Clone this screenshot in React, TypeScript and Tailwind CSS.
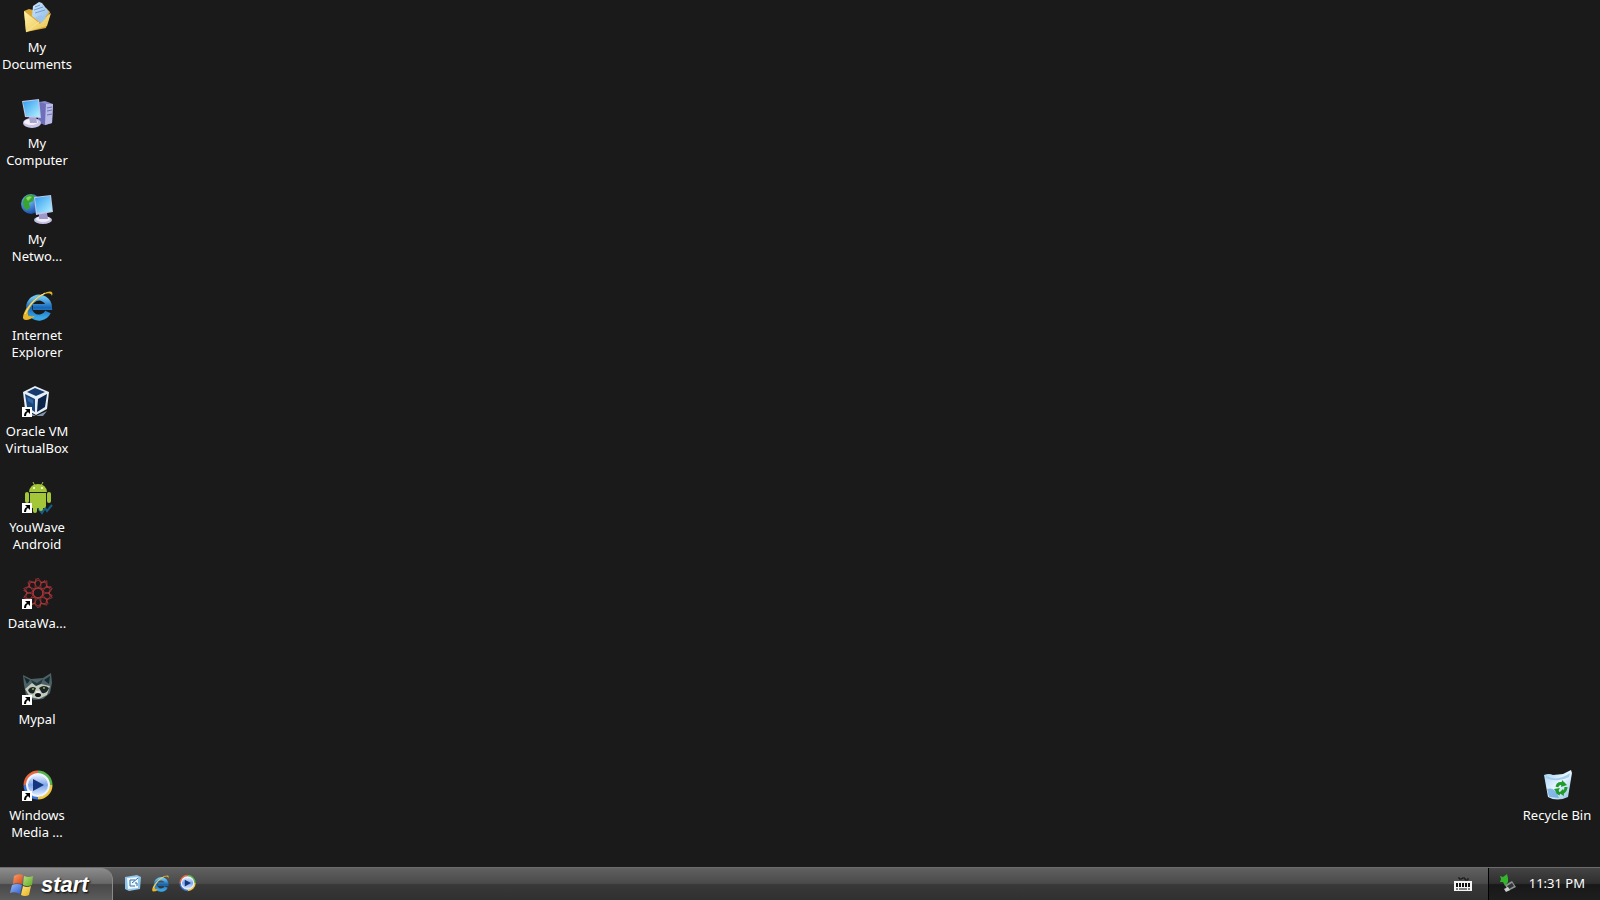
import React from 'react'

type Shortcut = {
    label: string
    Icon: () => React.ReactElement
    linked?: boolean
}

const DocumentsIcon = () => (
    <>
        <defs>
            <linearGradient id="folder" x1="0" y1="0" x2="1" y2="1">
                <stop offset="0" stopColor="#fff3a8" />
                <stop offset="1" stopColor="#e9bf4c" />
            </linearGradient>
            <linearGradient id="paper" x1="0" y1="0" x2="1" y2="1">
                <stop offset="0" stopColor="#cfe8fb" />
                <stop offset="1" stopColor="#8db8e6" />
            </linearGradient>
        </defs>
        <path d="M3 10 L8 8 L12 9 L25 7 L29 11 L25 27 L5 31 Z" fill="#d9a93a" />
        <path d="M18 1 L21 2 L28 11 L20 22 L11 15 L12 5 Z" fill="url(#paper)" />
        <path d="M14 6 L19 4 M13 9 L22 6 M14 12 L24 9" stroke="#6c9bd6" />
        <path d="M3 10 L13 18 L19 23 L24 17 L30 12 L26 25 L5 31 Z" fill="url(#folder)" />
        <path d="M14 17 L20 14 L25 17 L20 22 Z" fill="#9cc4ec" />
        <path d="M5 31 L18 21" stroke="#f8e490" />
    </>
)

const ComputerIcon = () => (
    <>
        <defs>
            <linearGradient id="screen" x1="0" y1="0" x2="1" y2="1">
                <stop offset="0" stopColor="#2f9cf0" />
                <stop offset="1" stopColor="#b5f2ff" />
            </linearGradient>
        </defs>
        <path d="M18 5 L24 4 L32 7 L31 26 L24 28 L17 25 Z" fill="#8a8ccb" />
        <path d="M18 5 L25 7 L24 28 L17 25 Z" fill="#6d6fb8" />
        <path d="M25 7 L32 7 L31 26 L24 28 Z" fill="#b9bae6" />
        <path d="M26 11 L31 10 M26 14 L31 13 M26 18 L31 17" stroke="#6f71b9" />
        <ellipse cx="11" cy="26" rx="9" ry="5" fill="#c9c5e6" />
        <ellipse cx="10" cy="25" rx="7" ry="3" fill="#f3f1fb" />
        <path d="M8 20 L15 20 L16 26 L9 26 Z" fill="#a6a3cf" />
        <path d="M1 4 L18 2 L20 21 L4 20 Z" fill="#c3c6ea" />
        <path d="M2 5 L17 3 L19 20 L5 19 Z" fill="url(#screen)" />
    </>
)

const NetworkIcon = () => (
    <>
        <defs>
            <radialGradient id="globe" cx="0.35" cy="0.3" r="0.8">
                <stop offset="0" stopColor="#7cc8ff" />
                <stop offset="1" stopColor="#0d3f9e" />
            </radialGradient>
        </defs>
        <circle cx="10" cy="11" r="10" fill="url(#globe)" />
        <path d="M4 4 Q9 0 14 3 L12 8 L8 10 L9 15 L5 17 Q1 12 2 8 Z" fill="#3aa52e" />
        <path d="M5 5 Q8 2 11 4 L7 8 Z" fill="#86da5e" />
        <ellipse cx="22" cy="27" rx="9" ry="4" fill="#c5c1e2" />
        <ellipse cx="22" cy="26" rx="7" ry="3" fill="#eeecf8" />
        <path d="M18 20 L26 20 L27 26 L18 26 Z" fill="#9c98c8" />
        <path d="M13 4 L30 2 L32 19 L15 22 Z" fill="#c3c6ea" />
        <path d="M14 5 L29 3 L31 18 L16 20 Z" fill="url(#screen)" />
    </>
)

const ExplorerIcon = () => (
    <>
        <defs>
            <linearGradient id="letter" x1="0" y1="0" x2="0" y2="1">
                <stop offset="0" stopColor="#6cc3f2" />
                <stop offset="0.5" stopColor="#1666b8" />
                <stop offset="1" stopColor="#3aa6e6" />
            </linearGradient>
        </defs>
        <path
            d="M27 23 A10 10 0 1 1 28 18 L12 18"
            fill="none"
            stroke="url(#letter)"
            strokeWidth="6"
        />
        <path
            d="M31 7 Q33 1 26 3 Q14 7 5 20 Q-1 31 5 31 Q9 31 14 27 Q5 29 7 22 Q13 10 24 5 Q30 3 31 7 Z"
            fill="#e5b52c"
        />
        <path d="M4 25 Q10 11 24 4" fill="none" stroke="#fbe68a" />
    </>
)

const VirtualBoxIcon = () => (
    <>
        <path d="M6 26 L15 31 L26 26 L22 31 L10 31 Z" fill="#7d93ad" />
        <path d="M14 1 L28 7 L26 24 L15 30 L4 24 L2 7 Z" fill="#e6eef7" />
        <path d="M14 3 L24 7 L15 11 L6 7 Z" fill="#163a6b" />
        <path d="M4 9 L14 14 L14 27 L6 22 Z" fill="#1b477f" />
        <path d="M26 9 L17 14 L16 27 L24 22 Z" fill="#0c2448" />
        <path d="M6 12 L12 15 L12 19 L7 16 Z" fill="#3568a4" />
    </>
)

const AndroidIcon = () => (
    <>
        <path d="M12 1 L14 5 M22 1 L20 5" stroke="#9fc33b" />
        <path d="M8 11 Q9 3 17 3 Q25 3 26 11 Z" fill="#a4c639" />
        <circle cx="13" cy="7" r="1" fill="#fff" />
        <circle cx="21" cy="7" r="1" fill="#fff" />
        <path d="M16 26 L21 32 L24 27 L26 30 L31 24" fill="none" stroke="#155f86" strokeWidth="2" />
        <rect x="4" y="11" width="4" height="11" rx="2" fill="#a4c639" />
        <rect x="26" y="11" width="4" height="11" rx="2" fill="#a4c639" />
        <path d="M9 12 H25 V25 Q25 27 23 27 H11 Q9 27 9 25 Z" fill="#a4c639" />
        <rect x="12" y="25" width="4" height="7" rx="2" fill="#a4c639" />
        <rect x="18" y="25" width="4" height="5" rx="2" fill="#a4c639" />
    </>
)

const DataWaveIcon = () => (
    <g fill="none" stroke="#b5363b" strokeWidth="0.7">
        {[0, 36, 72, 108, 144, 180, 216, 252, 288, 324].map((angle) => (
            <g key={angle} transform={`rotate(${angle} 17 16)`}>
                <path d="M17 1 L21 6 L17 11 L13 6 Z" />
                <path d="M13 6 L17 3 L21 6 L24 3" />
                <path d="M17 11 L22 13" />
            </g>
        ))}
        <circle cx="17" cy="16" r="5" />
    </g>
)

const RaccoonIcon = () => (
    <>
        <path d="M2 2 L10 6 L22 5 L30 0 L31 10 L29 20 L22 26 L13 27 L5 22 L3 12 Z" fill="#4c6266" />
        <path d="M3 4 L9 7 L6 11 Z" fill="#15292f" />
        <path d="M29 3 L23 7 L28 11 Z" fill="#15292f" />
        <path d="M10 7 L16 10 L22 6 L18 15 L14 15 Z" fill="#23363b" />
        <path d="M4 16 L11 10 L15 13 L20 11 L29 13 L26 22 L18 26 L9 24 Z" fill="#c3c9bd" />
        <path d="M7 17 Q10 12 15 15 L13 20 Q9 22 7 17 Z" fill="#1b2724" />
        <path d="M28 15 Q23 11 18 15 L21 20 Q26 21 28 15 Z" fill="#1b2724" />
        <circle cx="12" cy="16" r="1" fill="#98a85e" />
        <circle cx="23" cy="15" r="1" fill="#98a85e" />
        <path d="M15 18 L19 18 L20 23 L14 24 Z" fill="#e9ebe2" />
        <ellipse cx="17" cy="22" rx="3" ry="2" fill="#0d1212" />
    </>
)

const MediaPlayerIcon = () => (
    <>
        <defs>
            <linearGradient id="disc" x1="0" y1="0" x2="0" y2="1">
                <stop offset="0" stopColor="#f4f8ff" />
                <stop offset="0.5" stopColor="#7da6ea" />
                <stop offset="1" stopColor="#e2eeff" />
            </linearGradient>
        </defs>
        <g fill="none" strokeWidth="3">
            <path d="M4 16 A13 13 0 0 1 17 3" stroke="#e8673a" />
            <path d="M17 3 A13 13 0 0 1 30 16" stroke="#58b34b" />
            <path d="M30 16 A13 13 0 0 1 17 29" stroke="#f0c63a" />
            <path d="M17 29 A13 13 0 0 1 4 16" stroke="#3b76d8" />
        </g>
        <circle cx="17" cy="16" r="11" fill="url(#disc)" stroke="#eef4ff" strokeWidth="2" />
        <path d="M12 10 L23 16 L12 22 Z" fill="#15367f" />
    </>
)

const RecycleIcon = () => (
    <>
        <defs>
            <linearGradient id="bin" x1="0" y1="0" x2="1" y2="1">
                <stop offset="0" stopColor="#9fd0f2" />
                <stop offset="0.5" stopColor="#e8f6ff" />
                <stop offset="1" stopColor="#8ebfe4" />
            </linearGradient>
        </defs>
        <path d="M3 6 Q8 4 12 6 L22 5 L30 1 L31 4 L27 28 Q16 33 7 28 Z" fill="url(#bin)" />
        <path d="M5 7 Q17 13 29 4 L28 8 Q17 14 5 9 Z" fill="#a5cdea" />
        <path d="M6 20 Q14 17 18 29 L8 28 Z" fill="#5c9fdc" opacity="0.7" />
        <g fill="none" stroke="#1f9a2b" strokeWidth="3">
            <path d="M16 18 Q17 13 23 15" />
            <path d="M25 18 Q25 22 21 24" />
            <path d="M16 21 Q16 24 19 25" />
        </g>
        <path d="M21 11 L26 16 L20 18 Z M22 20 L18 24 L23 27 Z M13 20 L19 19 L16 24 Z" fill="#1f9a2b" />
    </>
)

const ShortcutArrow = () => (
    <>
        <rect x="1" y="22" width="10" height="10" fill="#fff" />
        <path d="M4 24 H9 V29 L7 27 Q5 28 5 31 H3 Q3 27 6 26 Z" fill="#000" />
    </>
)

const shortcuts: Shortcut[] = [
    { label: 'My\nDocuments', Icon: DocumentsIcon },
    { label: 'My\nComputer', Icon: ComputerIcon },
    { label: 'My\nNetwo...', Icon: NetworkIcon },
    { label: 'Internet\nExplorer', Icon: ExplorerIcon },
    { label: 'Oracle VM\nVirtualBox', Icon: VirtualBoxIcon, linked: true },
    { label: 'YouWave\nAndroid', Icon: AndroidIcon, linked: true },
    { label: 'DataWa...', Icon: DataWaveIcon, linked: true },
    { label: 'Mypal', Icon: RaccoonIcon, linked: true },
    { label: 'Windows\nMedia ...', Icon: MediaPlayerIcon, linked: true },
]

const DesktopItem = ({ label, Icon, linked }: Shortcut) => (
    <button className="flex h-24 w-full flex-col items-center gap-1.5 pt-px text-[13px] leading-[17px]">
        <svg viewBox="0 0 32 32" className="size-8 shrink-0 overflow-visible">
            <Icon />
            {linked && <ShortcutArrow />}
        </svg>
        <span className="whitespace-pre-line">{label}</span>
    </button>
)

const WindowsLogo = () => (
    <svg viewBox="0 0 24 24" className="size-6">
        <defs>
            <linearGradient id="red" x1="0" y1="0" x2="1" y2="1">
                <stop offset="0" stopColor="#f9a06a" />
                <stop offset="1" stopColor="#d9461b" />
            </linearGradient>
            <linearGradient id="green" x1="0" y1="0" x2="1" y2="1">
                <stop offset="0" stopColor="#b8e07a" />
                <stop offset="1" stopColor="#5fa828" />
            </linearGradient>
            <linearGradient id="blue" x1="0" y1="0" x2="1" y2="1">
                <stop offset="0" stopColor="#9ab8f5" />
                <stop offset="1" stopColor="#2f5fd0" />
            </linearGradient>
            <linearGradient id="yellow" x1="0" y1="0" x2="1" y2="1">
                <stop offset="0" stopColor="#fbe780" />
                <stop offset="1" stopColor="#e8b01c" />
            </linearGradient>
        </defs>
        <path d="M4 3 Q8 0 13 2 L12 11 Q7 9 3 11 Z" fill="url(#red)" />
        <path d="M14 3 Q18 5 23 3 L22 12 Q17 14 13 12 Z" fill="url(#green)" />
        <path d="M2 12 Q7 10 12 12 L10 21 Q5 18 0 20 Z" fill="url(#blue)" />
        <path d="M13 13 Q17 15 21 13 L19 22 Q15 24 11 22 Z" fill="url(#yellow)" />
    </svg>
)

const ShowDesktopIcon = () => (
    <svg viewBox="0 0 18 18" className="size-[18px]">
        <path d="M1 3 L13 1 L17 3 L16 15 L5 17 L1 15 Z" fill="#8fc4ea" />
        <path d="M3 4 L14 3 L14 14 L4 15 Z" fill="#eef7fd" />
        <path d="M11 6 H6 V12 H11 M8 9 L14 4 M11 9 H13 V12" fill="none" stroke="#2d6fa8" />
    </svg>
)

const KeyboardIcon = () => (
    <svg viewBox="0 0 20 16" className="h-4 w-5">
        <path d="M6 1 V3 H9 V2 H12 V4 H15 V2" fill="none" stroke="#111" />
        <rect x="1" y="5" width="18" height="10" fill="#f4f4f4" />
        <path d="M3 8 H17 M3 10 H17" stroke="#111" strokeWidth="2" strokeDasharray="2 1" />
        <path d="M3 13 H17" stroke="#111" strokeDasharray="2 1 8 1 2" />
    </svg>
)

const SafelyRemoveIcon = () => (
    <svg viewBox="0 0 18 18" className="size-[18px]">
        <path d="M6 11 L13 7 L17 13 L9 17 Z" fill="#8d9492" />
        <path d="M8 12 L13 9 L15 12 L10 15 Z" fill="#303635" />
        <path d="M5 15 L9 13 L11 16 L7 18 Z" fill="#c9cecc" />
        <path d="M1 2 L4 3 L8 0 L9 4 L9 8 L6 12 L4 8 L1 8 L2 5 Z" fill="#35b32c" />
    </svg>
)

export default function App() {
    return (
        <div className="flex min-h-screen flex-col bg-[#1a1a1a] font-['Noto_Sans',sans-serif] text-white">
            <main className="flex flex-1 justify-between">
                <nav aria-label="Shortcuts" className="flex w-[74px] flex-col">
                    {shortcuts.map((item) => (
                        <DesktopItem key={item.label} {...item} />
                    ))}
                </nav>
                <div className="flex w-[86px] flex-col justify-end pb-[3px]">
                    <DesktopItem label="Recycle Bin" Icon={RecycleIcon} />
                </div>
            </main>

            <footer className="flex h-[33px] shrink-0 border-t border-[#6c6c6c] bg-[linear-gradient(#606060,#4a4a4a_48%,#383838_52%,#303030)]">
                <button className="flex w-[113px] items-center gap-[7px] rounded-tr-xl border-r border-[#8a8a8a] bg-[linear-gradient(#8c8c8c,#686868_48%,#484848_52%,#5c5c5c)] pl-2.5 pt-px">
                    <WindowsLogo />
                    <span className="font-['Liberation_Sans',sans-serif] text-[22px] leading-6 font-bold italic text-shadow-[1px_1px_2px_#000]">
                        start
                    </span>
                </button>
                <div className="flex flex-1 items-center gap-[9px] pb-0.5 pl-[11px]">
                    <button aria-label="Show desktop">
                        <ShowDesktopIcon />
                    </button>
                    <button aria-label="Internet Explorer">
                        <svg viewBox="0 0 32 32" className="size-[18px]">
                            <ExplorerIcon />
                        </svg>
                    </button>
                    <button aria-label="Windows Media Player">
                        <svg viewBox="0 0 32 32" className="size-[18px]">
                            <MediaPlayerIcon />
                        </svg>
                    </button>
                </div>
                <button aria-label="On-screen keyboard" className="px-[15px]">
                    <KeyboardIcon />
                </button>
                <div className="flex items-center gap-3 border-l border-black bg-[linear-gradient(#444,#2e2e2e_48%,#181818_52%,#1e1e1e)] pr-[15px] pb-0.5 pl-2.5">
                    <button aria-label="Safely remove hardware">
                        <SafelyRemoveIcon />
                    </button>
                    <time className="text-[13px] leading-[17px]">11:31 PM</time>
                </div>
            </footer>
        </div>
    )
}
